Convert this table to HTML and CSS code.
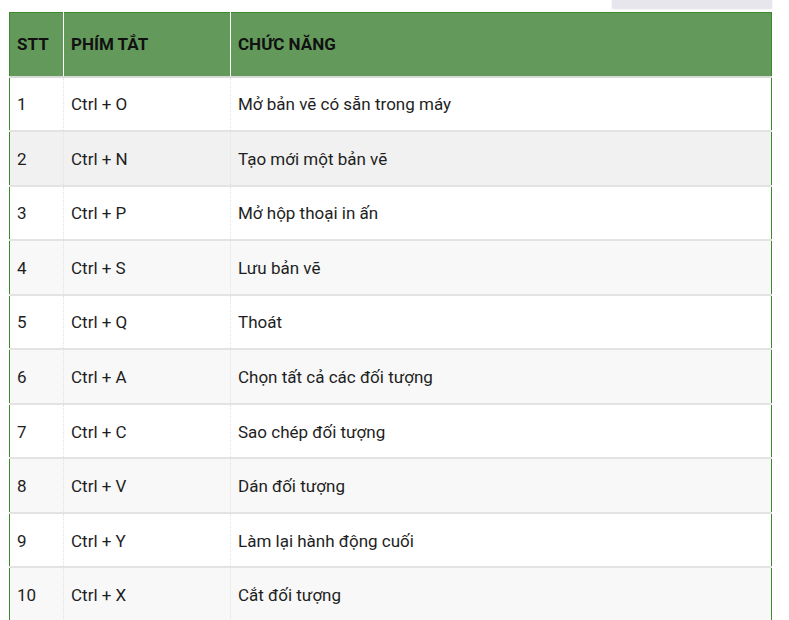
FILE: index.html
```html
<!DOCTYPE html>
<html lang="vi">
<head>
<meta charset="utf-8">
<link rel="stylesheet" href="styles.css">
</head>
<body>
<div class="topbar"><div class="tab"></div></div>
<table class="shortcuts">
  <colgroup><col class="c1"><col class="c2"><col class="c3"></colgroup>
  <thead>
    <tr><th>STT</th><th>PHÍM TẮT</th><th>CHỨC NĂNG</th></tr>
  </thead>
  <tbody>
    <tr><td>1</td><td>Ctrl + O</td><td>Mở bản vẽ có sẵn trong máy</td></tr>
    <tr class="hl"><td>2</td><td>Ctrl + N</td><td>Tạo mới một bản vẽ</td></tr>
    <tr><td>3</td><td>Ctrl + P</td><td>Mở hộp thoại in ấn</td></tr>
    <tr class="alt"><td>4</td><td>Ctrl + S</td><td>Lưu bản vẽ</td></tr>
    <tr><td>5</td><td>Ctrl + Q</td><td>Thoát</td></tr>
    <tr class="alt"><td>6</td><td>Ctrl + A</td><td>Chọn tất cả các đối tượng</td></tr>
    <tr><td>7</td><td>Ctrl + C</td><td>Sao chép đối tượng</td></tr>
    <tr class="alt"><td>8</td><td>Ctrl + V</td><td>Dán đối tượng</td></tr>
    <tr><td>9</td><td>Ctrl + Y</td><td>Làm lại hành động cuối</td></tr>
    <tr class="alt"><td>10</td><td>Ctrl + X</td><td>Cắt đối tượng</td></tr>
  </tbody>
</table>
</body>
</html>
```
FILE: styles.css
```css
html, body { margin: 0; padding: 0; background: #fff; }
body { font-family: Roboto, "Noto Sans", sans-serif; color: #1e1e1e; overflow: hidden; }
.topbar { height: 12px; display: flex; justify-content: flex-end; padding-right: 17px; }
.tab { width: 160px; height: 8px; background: #e6e6ec; box-shadow: 0 1px 2px rgba(0,0,0,0.12); }
.shortcuts { margin-left: 9px; width: 763px; border-collapse: collapse; border: 1px solid #3b8a2c; table-layout: fixed; font-size: 17px; }
.c1 { width: 54px; }
.c2 { width: 167px; }
.shortcuts th { background: #639a5b; color: #111; font-weight: 700; text-align: left; height: 64px; padding: 0 7px; border-left: 1px solid #fff; border-bottom: 2px solid #d9d9d9; box-sizing: border-box; }
.shortcuts th:first-child { border-left: none; }
.shortcuts td { height: 54.56px; padding: 1px 7px 0; border-top: 2px solid #e3e3e3; border-left: 1px dotted #e2e2e2; box-sizing: border-box; line-height: 20px; }
.shortcuts td:first-child { border-left: none; }
.shortcuts tbody tr:first-child td { border-top: none; }
.hl { background: #f1f1f1; }
.alt { background: #f8f8f8; }
```
